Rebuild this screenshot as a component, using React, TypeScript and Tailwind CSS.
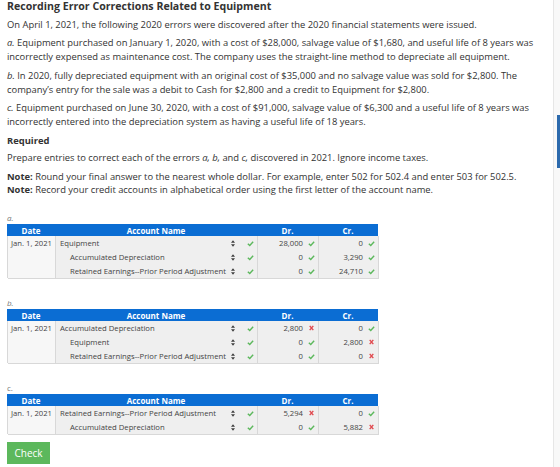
import React from "react";

type Line = {
  date?: string;
  account: string;
  credit?: boolean;
  dr: string;
  drOk: boolean;
  cr: string;
  crOk: boolean;
};

const entryA: Line[] = [
  { date: "Jan. 1, 2021", account: "Equipment", dr: "28,000", drOk: true, cr: "0", crOk: true },
  { account: "Accumulated Depreciation", credit: true, dr: "0", drOk: true, cr: "3,290", crOk: true },
  { account: "Retained Earnings--Prior Period Adjustment", credit: true, dr: "0", drOk: true, cr: "24,710", crOk: true },
];

const entryB: Line[] = [
  { date: "Jan. 1, 2021", account: "Accumulated Depreciation", dr: "2,800", drOk: false, cr: "0", crOk: true },
  { account: "Equipment", credit: true, dr: "0", drOk: true, cr: "2,800", crOk: false },
  { account: "Retained Earnings--Prior Period Adjustment", credit: true, dr: "0", drOk: true, cr: "0", crOk: false },
];

const entryC: Line[] = [
  { date: "Jan. 1, 2021", account: "Retained Earnings--Prior Period Adjustment", dr: "5,294", drOk: false, cr: "0", crOk: true },
  { account: "Accumulated Depreciation", credit: true, dr: "0", drOk: true, cr: "5,882", crOk: false },
];

const CheckMark = () => (
  <svg viewBox="0 0 10 10" className="h-[7px] w-[7px] shrink-0">
    <path d="M1.2 5.4 L3.9 7.9 L8.8 2.4" fill="none" stroke="#5cb85c" strokeWidth="2" />
  </svg>
);

const Cross = () => (
  <svg viewBox="0 0 10 10" className="h-[6px] w-[7px] shrink-0">
    <path d="M2 1.5 L8 8.5 M8 1.5 L2 8.5" stroke="#e04a4f" strokeWidth="2.4" />
  </svg>
);

const SortArrows = () => (
  <svg viewBox="0 0 6 10" className="h-[7px] w-[4px] shrink-0">
    <path d="M3 0 L6 4 H0 Z M3 10 L0 6 H6 Z" fill="#3f3f3f" />
  </svg>
);

const Mark = ({ ok }: { ok: boolean }) => (ok ? <CheckMark /> : <Cross />);

const JournalTable = ({ rows }: { rows: Line[] }) => (
  <div className="w-[371px] text-[7.7px] text-[#444]">
    <div className="grid h-[12px] grid-cols-[48px_202px_61px_60px] items-center bg-[#0b6dd3] text-[8px] font-bold text-white">
      <div className="text-center">Date</div>
      <div className="text-center">Account Name</div>
      <div className="text-center">Dr.</div>
      <div className="text-center">Cr.</div>
    </div>
    {rows.map((r, i) => (
      <div
        key={i}
        className="grid h-[14px] grid-cols-[48px_202px_61px_60px] border-l border-[#d8d8d8]"
      >
        <div className="flex items-center justify-center border-r border-b border-[#d8d8d8] bg-[#f7f7f7] whitespace-nowrap">
          {r.date}
        </div>
        <div className="flex items-center border-r border-b border-[#d8d8d8] bg-[#efefef]">
          <span className={`min-w-0 flex-1 whitespace-nowrap ${r.credit ? "pl-[14px]" : "pl-[4px]"}`}>
            {r.account}
          </span>
          <div className="flex w-[26px] shrink-0 items-center gap-[12px]">
            <SortArrows />
            <CheckMark />
          </div>
        </div>
        <div className="flex items-center justify-end gap-[5px] border-r border-b border-[#d8d8d8] bg-[#efefef] pr-[3px]">
          <span>{r.dr}</span>
          <Mark ok={r.drOk} />
        </div>
        <div className="flex items-center justify-end gap-[5px] border-r border-b border-[#d8d8d8] bg-[#efefef] pr-[3px]">
          <span>{r.cr}</span>
          <Mark ok={r.crOk} />
        </div>
      </div>
    ))}
  </div>
);

export default function App() {
  return (
    <div className="flex h-[467px] w-[560px] overflow-hidden bg-white font-['Open_Sans',sans-serif] text-[#333]">
      <div className="w-[553px] px-[7px] text-[9.4px] leading-[14px]">
        <div className="text-[10.6px] leading-[12px] font-bold whitespace-nowrap">
          Recording Error Corrections Related to Equipment
        </div>
        <p className="mt-[6px] whitespace-nowrap">
          On April 1, 2021, the following 2020 errors were discovered after the 2020 financial statements were issued.
        </p>
        <p className="mt-[4px] whitespace-nowrap">
          <i>a.</i> Equipment purchased on January 1, 2020, with a cost of $28,000, salvage value of $1,680, and useful life of 8 years was
          <br />
          incorrectly expensed as maintenance cost. The company uses the straight-line method to depreciate all equipment.
        </p>
        <p className="mt-[5px] whitespace-nowrap">
          <i>b.</i> In 2020, fully depreciated equipment with an original cost of $35,000 and no salvage value was sold for $2,800. The
          <br />
          company’s entry for the sale was a debit to Cash for $2,800 and a credit to Equipment for $2,800.
        </p>
        <p className="mt-[4px] whitespace-nowrap">
          <i>c.</i> Equipment purchased on June 30, 2020, with a cost of $91,000, salvage value of $6,300 and a useful life of 8 years was
          <br />
          incorrectly entered into the depreciation system as having a useful life of 18 years.
        </p>
        <div className="mt-[5px] font-bold">Required</div>
        <p className="mt-[3px] whitespace-nowrap">
          Prepare entries to correct each of the errors <i>a, b,</i> and <i>c,</i> discovered in 2021. Ignore income taxes.
        </p>
        <div className="mt-[5px] leading-[13px] whitespace-nowrap">
          <div>
            <b>Note:</b> Round your final answer to the nearest whole dollar. For example, enter 502 for 502.4 and enter 503 for 502.5.
          </div>
          <div>
            <b>Note:</b> Record your credit accounts in alphabetical order using the first letter of the account name.
          </div>
        </div>

        <div className="mt-[17px] text-[8px] leading-[10px] text-[#777] italic">a.</div>
        <div className="mt-[1px]">
          <JournalTable rows={entryA} />
        </div>

        <div className="mt-[20px] text-[8px] leading-[10px] text-[#777] italic">b.</div>
        <div className="mt-[1px]">
          <JournalTable rows={entryB} />
        </div>

        <div className="mt-[20px] text-[8px] leading-[10px] text-[#777]">c.</div>
        <div className="mt-[1px]">
          <JournalTable rows={entryC} />
        </div>

        <button className="mt-[8px] flex h-[22px] w-[43px] items-center justify-center bg-[#5cb85c] text-[10px] text-white">
          Check
        </button>
      </div>
      <div className="w-[7px] border-l border-[#e6e6e6] bg-[#f8f8f8] pt-[115px]">
        <div className="ml-auto h-[53px] w-[3px] bg-[#2c6aad]" />
      </div>
    </div>
  );
}
